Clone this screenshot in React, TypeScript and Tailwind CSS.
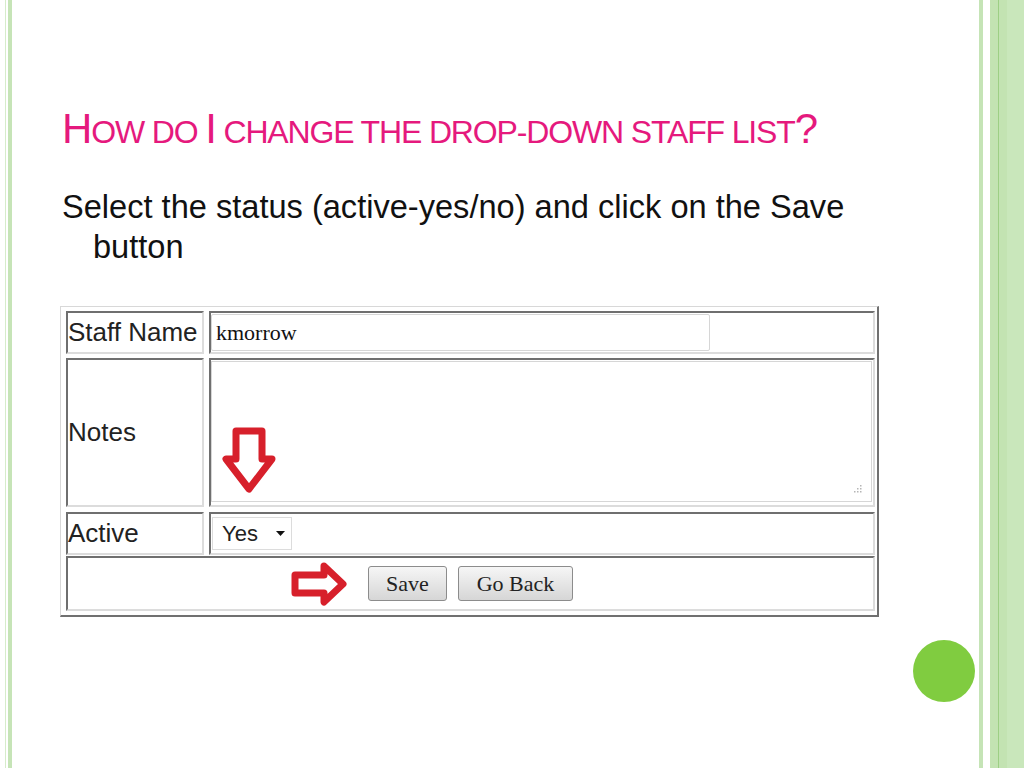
import React from 'react';

const sans = { fontFamily: '"Liberation Sans", Arial, sans-serif' };

function DownArrow() {
  return (
    <svg width="54" height="67" viewBox="0 0 54 67" className="absolute left-[10px] top-[65px]">
      <polygon
        points="14,4 40,4 40,32 50,32 27,62 4,32 14,32"
        fill="white"
        stroke="#d7202b"
        strokeWidth="7"
        strokeLinejoin="round"
      />
    </svg>
  );
}

function RightArrow() {
  return (
    <svg width="57" height="44" viewBox="0 0 57 44" className="absolute right-full top-1/2 mr-[20px] -translate-y-1/2">
      <polygon
        points="4,13 33,13 33,4 52,22 33,40 33,31 4,31"
        fill="white"
        stroke="#d7202b"
        strokeWidth="7"
        strokeLinejoin="round"
      />
    </svg>
  );
}

function Cell({ children, className = '' }: { children?: React.ReactNode; className?: string }) {
  return (
    <div className={`border-t-2 border-l-2 border-t-[#6f6f6f] border-l-[#6f6f6f] border-b-2 border-r-2 border-b-[#dcdcdc] border-r-[#dcdcdc] ${className}`}>
      {children}
    </div>
  );
}

function Button({ label, width }: { label: string; width: string }) {
  return (
    <div
      className={`${width} h-[35px] flex items-center justify-center rounded-[3px] border border-[#8c8c8c] bg-gradient-to-b from-[#f6f6f6] to-[#d6d6d6] text-[22px] text-[#222]`}
      style={{ fontFamily: '"Liberation Serif", "Times New Roman", serif' }}
    >
      {label}
    </div>
  );
}

function StaffForm() {
  return (
    <div
      className="w-[819px] border-t border-l border-t-[#d8d8d8] border-l-[#d8d8d8] border-r-2 border-b-2 border-r-[#707070] border-b-[#707070] pt-[4px] pl-[5px] pr-[2px] pb-[4px] flex flex-col gap-[4px] text-[26px] text-[#222]"
      style={sans}
    >
      <div className="grid grid-cols-[138px_666px] gap-x-[5px] h-[43px]">
        <Cell className="flex items-center whitespace-nowrap">Staff Name</Cell>
        <Cell className="flex items-center">
          <div
            className="w-[499px] h-[37px] border border-[#d6d6d6] rounded-[2px] bg-white flex items-center pl-[4px] text-[22px] text-[#111]"
            style={{ fontFamily: '"Liberation Serif", "Times New Roman", serif' }}
          >
            kmorrow
          </div>
        </Cell>
      </div>

      <div className="grid grid-cols-[138px_666px] gap-x-[5px] h-[149px]">
        <Cell className="flex items-center">Notes</Cell>
        <Cell className="pt-[1px]">
          <div className="relative w-[661px] h-[141px] border border-[#d6d6d6] bg-white">
            <DownArrow />
            <svg width="10" height="10" viewBox="0 0 10 10" className="absolute right-[8px] bottom-[7px]">
              <g fill="#b5b5b5">
                <rect x="7" y="1" width="1.5" height="1.5" />
                <rect x="4" y="4" width="1.5" height="1.5" />
                <rect x="7" y="4" width="1.5" height="1.5" />
                <rect x="1" y="7" width="1.5" height="1.5" />
                <rect x="4" y="7" width="1.5" height="1.5" />
                <rect x="7" y="7" width="1.5" height="1.5" />
              </g>
            </svg>
          </div>
        </Cell>
      </div>

      <div className="grid grid-cols-[138px_666px] gap-x-[5px] h-[39px] mt-[1px]">
        <Cell className="flex items-center">Active</Cell>
        <Cell className="flex items-center pl-[1px]">
          <div className="w-[80px] h-[33px] border border-[#dcdcdc] bg-white flex items-center pl-[9px] text-[22px] text-[#222]">
            <span>Yes</span>
            <svg width="9" height="5" viewBox="0 0 9 5" className="ml-[18px]">
              <polygon points="0,0 9,0 4.5,5" fill="#111" />
            </svg>
          </div>
        </Cell>
      </div>

      <div className="h-[55px] mt-[1px]">
        <Cell className="h-full flex items-center justify-center">
          <div className="relative flex items-center gap-[11px]">
            <RightArrow />
            <Button label="Save" width="w-[79px]" />
            <Button label="Go Back" width="w-[115px]" />
          </div>
        </Cell>
      </div>
    </div>
  );
}

export default function App() {
  return (
    <div className="relative w-[1024px] h-[768px] bg-white flex overflow-hidden">
      {/* left stripes */}
      <div className="flex h-full">
        <div className="w-[5px]" />
        <div className="w-px bg-[#d6ecca]" />
        <div className="w-[2px]" />
        <div className="w-[4px] bg-[#c6e4b7]" />
      </div>

      {/* slide content */}
      <div className="flex-1 pl-[48px] pt-[105px]">
        <div
          className="pl-[2px] text-[42px] leading-[48px] text-[#e5197d] uppercase tracking-[-1.15px] whitespace-nowrap"
          style={sans}
        >
          H<span className="text-[32px]">ow do </span>I
          <span className="text-[32px]"> change the drop-down staff list</span>?
        </div>

        <p className="mt-[31px] pl-[33px] -indent-[31px] w-[830px] text-[32.6px] leading-[40px] text-[#111]" style={sans}>
          Select the status (active-yes/no) and click on the Save button
        </p>

        <div className="mt-[39px]">
          <StaffForm />
        </div>
      </div>

      {/* right stripes */}
      <div className="flex h-full">
        <div className="w-[4px] bg-[#c5e4b6]" />
        <div className="w-[7px]" />
        <div className="w-[8px] bg-[#c3e3b2]" />
        <div className="w-px bg-[#9dcf84]" />
        <div className="w-[8px] bg-[#c3e3b2]" />
        <div className="w-[17px] bg-[#c9e7bb]" />
      </div>

      <div className="absolute left-[913px] top-[640px] w-[62px] h-[62px] rounded-full bg-[#80cc40]" />
    </div>
  );
}
